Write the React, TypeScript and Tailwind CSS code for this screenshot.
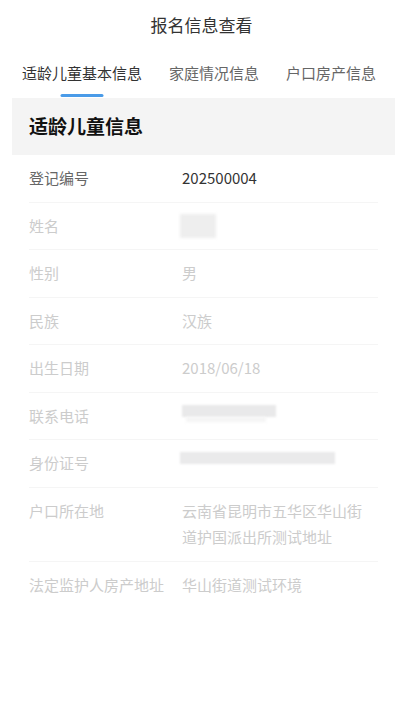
import { Fragment } from "react";

type Row = {
  label: string;
  value?: string;
  mask?: "name" | "phone" | "id";
  active?: boolean;
};

const TABS = ["适龄儿童基本信息", "家庭情况信息", "户口房产信息"];

const ROWS: Row[] = [
  { label: "登记编号", value: "202500004", active: true },
  { label: "姓名", mask: "name" },
  { label: "性别", value: "男" },
  { label: "民族", value: "汉族" },
  { label: "出生日期", value: "2018/06/18" },
  { label: "联系电话", mask: "phone" },
  { label: "身份证号", mask: "id" },
  { label: "户口所在地", value: "云南省昆明市五华区华山街道护国派出所测试地址" },
  { label: "法定监护人房产地址", value: "华山街道测试环境" },
];

// blurred blocks standing in for masked personal data
function Mask({ kind }: { kind: "name" | "phone" | "id" }) {
  if (kind === "name") {
    return (
      <div className="ml-[-2px] mt-[1px] h-[24px] w-[36px] bg-[#eeeeee] blur-[1.5px]" />
    );
  }
  if (kind === "phone") {
    return (
      <div className="flex flex-col pt-[2px]">
        <div className="h-[12px] w-[94px] bg-[#e9e9ea] blur-[1px]" />
        <div className="ml-[4px] h-[5px] w-[80px] bg-[#f4f4f4] blur-[1.5px]" />
      </div>
    );
  }
  return (
    <div className="ml-[-2px] mt-[2px] h-[12px] w-[155px] bg-[#eaeaeb] blur-[1px]" />
  );
}

export default function App() {
  return (
    <div
      className="min-h-[718px] w-full bg-white"
      style={{ fontFamily: '"Noto Sans CJK SC", "Noto Sans", sans-serif' }}
    >
      <div className="flex h-[50px] items-center justify-center text-[17px] text-[#333333]">
        报名信息查看
      </div>

      <div className="flex h-[48px] gap-[27px] px-[22px]">
        {TABS.map((t, i) => (
          <div
            key={t}
            className={
              i === 0
                ? "relative flex h-full items-center pb-[2px] text-[15px] text-[#333333]"
                : "relative flex h-full items-center pb-[2px] text-[15px] text-[#666666]"
            }
          >
            {t}
            {i === 0 && (
              <div className="absolute bottom-[1px] left-1/2 h-[3px] w-[43px] -translate-x-1/2 rounded-full bg-[#4a9be8]" />
            )}
          </div>
        ))}
      </div>

      <div className="ml-3 mr-[8px]">
        <div className="flex h-[57px] items-center bg-[#f4f4f4] px-[17px] text-[19px] font-bold text-[#111111]">
          适龄儿童信息
        </div>

        <div className="px-[17px]">
          {ROWS.map((r, i) => (
            <Fragment key={r.label}>
              <div
                className={
                  i === ROWS.length - 1
                    ? "flex py-[10px] text-[15px] leading-[26.5px]"
                    : "flex border-b border-[#f5f5f5] py-[10px] text-[15px] leading-[26.5px]"
                }
              >
                <div
                  className={
                    r.active
                      ? "w-[153px] shrink-0 text-[#666666]"
                      : "w-[153px] shrink-0 text-[#cccccc]"
                  }
                >
                  {r.label}
                </div>
                <div
                  className={
                    r.active ? "w-[190px] text-[#333333]" : "w-[190px] text-[#cccccc]"
                  }
                >
                  {r.mask ? <Mask kind={r.mask} /> : r.value}
                </div>
              </div>
            </Fragment>
          ))}
        </div>
      </div>
    </div>
  );
}
